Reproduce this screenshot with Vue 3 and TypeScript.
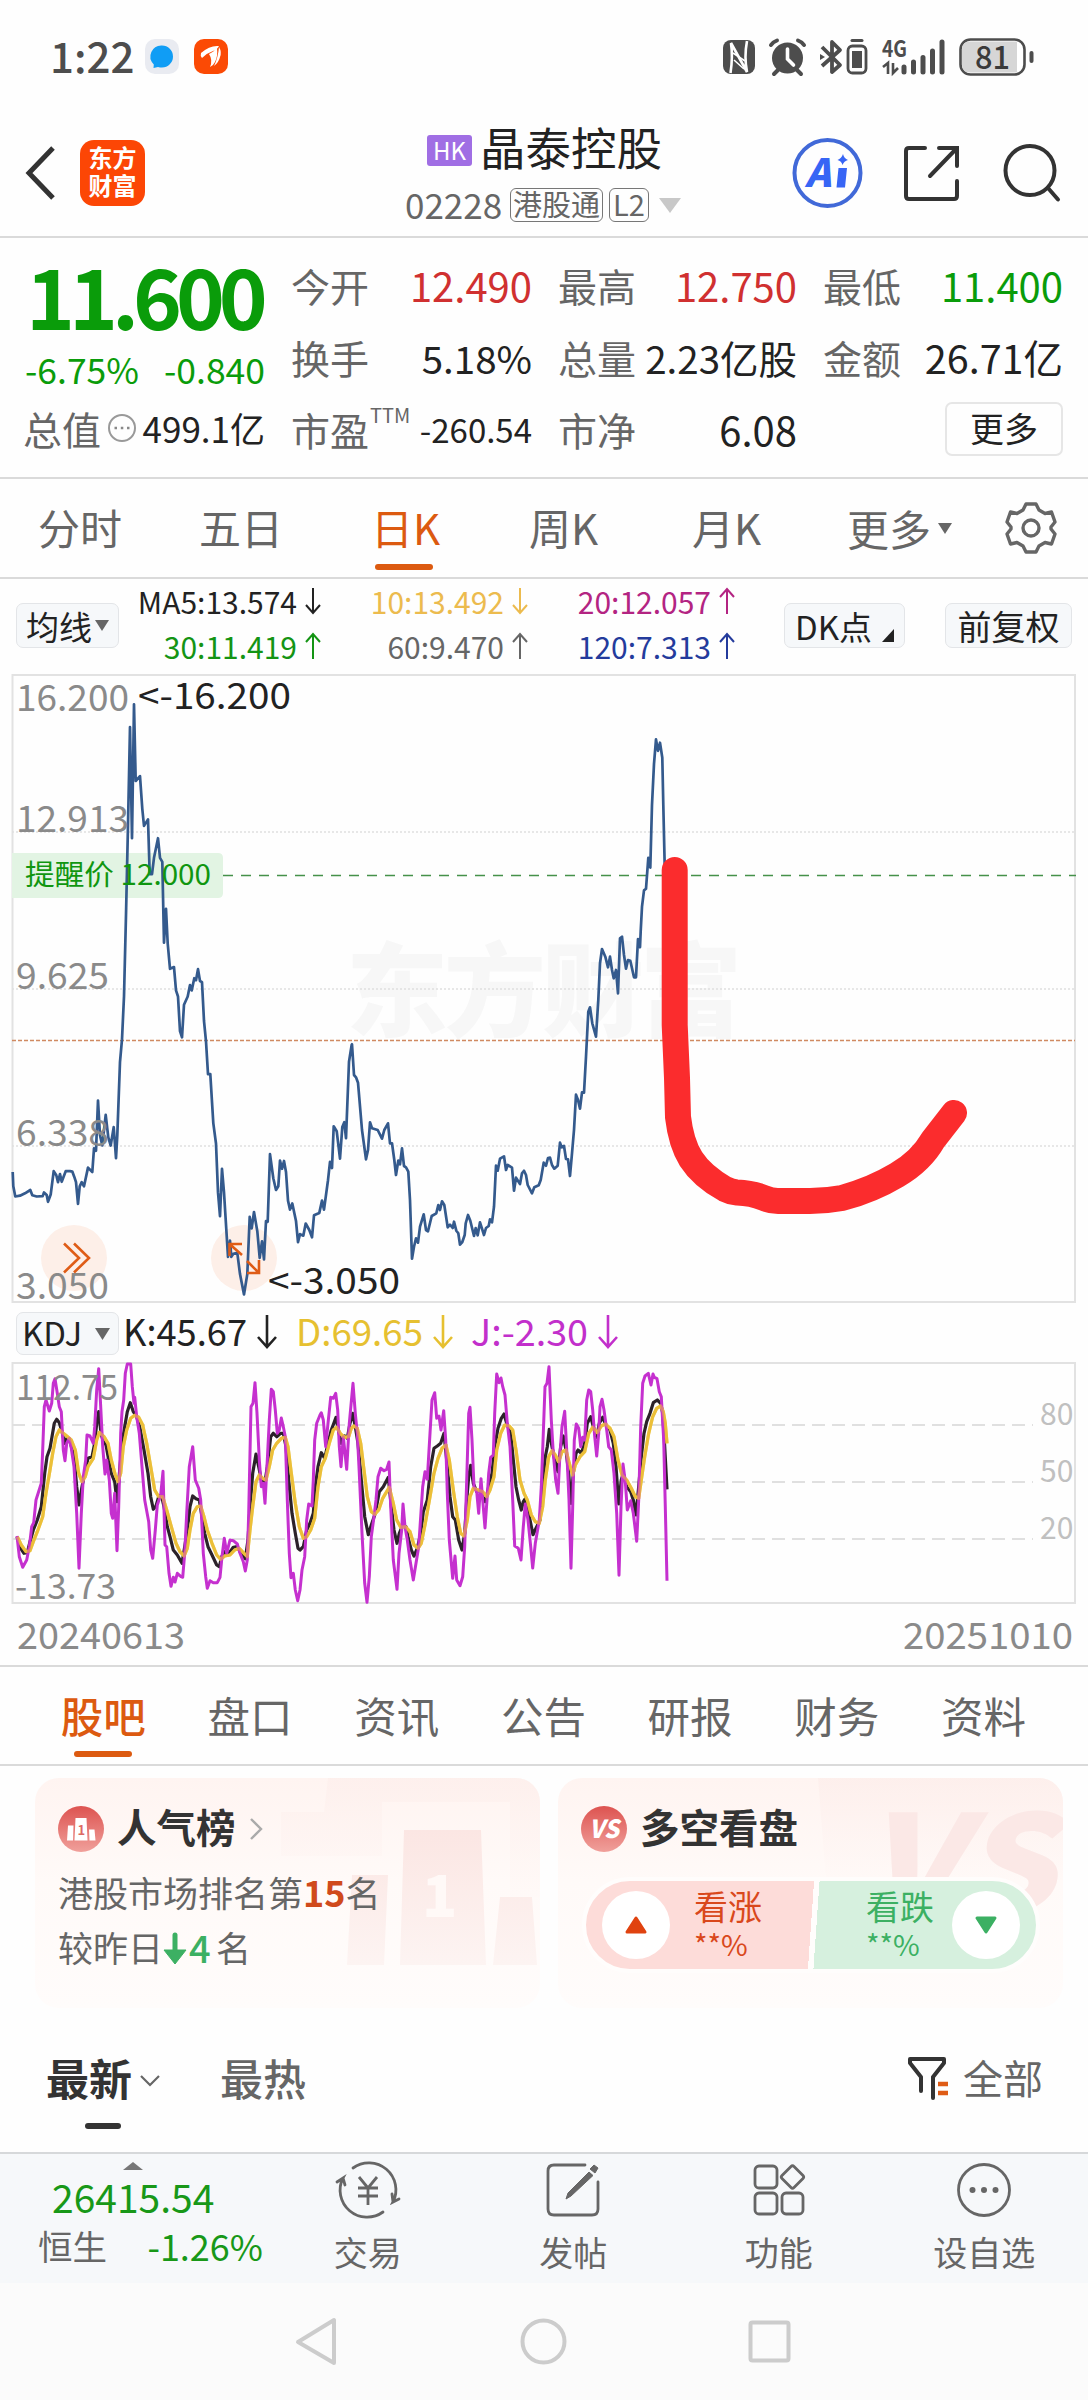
<script setup lang="ts">
interface Plane {
  x: number
  y: number
  sx: number
  sy: number
}

/** Places raw "x,y x,y" samples on the chart canvas. */
function place(raw: string, p: Plane): string {
  return raw
    .trim()
    .split(/\s+/)
    .map((pair) => {
      const [x, y] = pair.split(',').map(Number)
      return `${(p.x + x / p.sx).toFixed(1)},${(p.y + y / p.sy).toFixed(1)}`
    })
    .join(' ')
}

const priceLine = [
  place(
    '38,1230 40,1265 46,1290 60,1288 75,1282 91,1274 97,1287 110,1290 128,1289 132,1280 140,1286 144,1303 152,1285 161,1228 169,1238 174,1255 180,1235 185,1254 197,1228 210,1228 217,1229 223,1242 228,1255 234,1308 239,1265 245,1255 252,1265 264,1219 277,1230 282,1172 288,1178 294,1055 300,1140 307,1165 317,1090 325,1145 332,1165 341,1120 348,1196 352,1140 360,960 366,905 372,800 378,600 384,380 390,140 396,412 402,84 407,272 420,260 427,340 432,382 444,366 449,500 456,500 462,460 474,412 480,460 487,470 492,668 498,585 503,670 510,732 522,728 528,785 534,800 540,885 546,900 552,820 563,800 570,772 575,785 583,755 588,760 594,733 600,762 606,765 612,860 618,910 624,990 631,990 640,1110 648,1160 654,1280 660,1338 666,1222 672,1280 684,1438 690,1398 694,1438 700,1430 712,1428 720,1480 732,1530 742,1480 749,1340 755,1368 762,1328 772,1375 779,1440 786,1400 792,1444 798,1350 803,1352 810,1186 820,1245 828,1274 835,1265 840,1202 846,1222 852,1203 858,1230 864,1300 870,1322 877,1307 888,1350 894,1402 900,1382 910,1386 917,1356 928,1372 936,1390 942,1336 958,1330 966,1300 972,1322 984,1250 990,1205 996,1220 1001,1118 1010,1130 1020,1197 1027,1120 1033,1108 1038,1147 1047,960 1055,918',
    { x: 0, y: 670, sx: 3, sy: 2.45 },
  ),
  place(
    '36,433 42,525 48,532 54,548 66,690 78,778 84,750 90,667 96,685 113,690 126,716 133,690 144,670 150,730 156,730 163,780 168,825 175,782 180,793 186,745 192,798 198,802 205,815 210,900 216,1076 222,1040 228,1015 234,1028 240,980 251,943 258,990 264,994 275,948 289,940 295,915 300,930 306,904 313,915 323,982 330,974 338,984 342,965 349,992 355,1000 360,1034 367,1026 374,1005 377,970 384,945 391,962 402,1008 407,984 413,1006 420,967 432,1005 438,984 446,978 450,958 456,967 462,920 468,797 473,812 480,776 492,769 498,810 503,795 516,803 522,872 528,833 540,852 546,820 552,812 558,825 563,855 576,880 583,862 596,856 602,840 611,788 618,797 624,774 630,773 636,795 643,806 653,797 660,728 665,742 672,738 678,777 684,778 690,828 696,760 702,690 708,584 714,600 720,626 726,577 732,578 738,470 745,335 750,322 757,370 768,410 775,300 780,190 786,147 796,170 804,202 810,170 816,210 821,235 828,210 834,280 840,115 846,110 852,165 858,206 864,180 871,182 882,232 888,232 894,117 900,142',
    { x: 340, y: 900, sx: 3, sy: 3 },
  ),
  place(
    '2,640 6,580 12,540 18,536 25,460 31,484 36,330 42,230 48,170 54,198 60,178 67,215 70,330 74,480',
    { x: 640, y: 670, sx: 3, sy: 2.45 },
  ),
].join(' ')

const left: Plane = { x: 0, y: 1300, sx: 3, sy: 3 }
const right: Plane = { x: 350, y: 1300, sx: 3, sy: 3 }

const jLine =
  place(
    '51,708 58,770 68,802 80,780 88,740 95,680 101,668 108,600 124,550 128,450 133,320 138,300 148,333 155,310 160,250 165,236 172,280 178,320 184,335 190,450 195,482 200,430 208,415 214,445 222,500 230,640 237,805 244,640 250,530 257,480 261,405 270,408 280,430 284,380 290,270 296,206 302,320 308,440 315,522 320,480 328,540 334,640 338,655 344,580 351,752 356,620 362,400 366,335 371,300 376,220 382,192 392,192 397,260 402,310 404,292 410,350 418,400 426,500 434,600 446,665 452,750 458,775 466,690 472,615 482,585 489,514 495,735 500,740 507,820 513,859 520,832 525,846 532,820 543,830 548,832 554,760 560,640 568,500 578,440 586,540 596,565 602,600 606,680 610,760 617,830 622,865 630,842 640,848 652,848 660,832 666,770 673,715 680,760 690,720 700,722 712,732 720,760 730,785 736,813 742,780 746,640 753,320 759,310 765,248 771,340 778,480 784,560 790,550 795,610 802,480 808,360 814,268 820,275 826,330 832,400 838,390 844,354 850,380 856,410 862,600 868,760 873,833 880,820 886,870 893,902 900,870 906,810 914,770 920,660 926,612 936,618 940,540 944,420 950,370 960,345 964,338 970,360 977,440 984,370 992,292 1000,295 1007,280 1013,330 1018,440 1023,500 1030,410 1040,508 1048,370 1059,250',
    left,
  ) +
  ' ' +
  place(
    '16,340 22,400 28,520 36,700 44,850 51,907 58,830 64,710 72,650 78,600 84,530 92,505 102,512 110,508 117,486 122,620 130,780 141,868 147,760 155,690 159,612 165,680 172,720 180,780 190,840 198,790 206,740 212,650 218,560 225,515 232,538 240,400 246,300 254,278 260,355 267,348 273,390 281,332 287,420 292,580 298,720 308,835 315,768 320,840 330,857 338,830 344,740 350,540 356,340 360,322 366,420 372,560 380,575 386,640 393,536 398,600 405,684 411,600 416,520 422,472 430,465 434,340 440,222 447,248 453,234 458,260 465,285 472,370 480,440 488,600 494,738 505,745 513,780 520,680 526,612 534,660 542,740 548,804 556,730 568,660 574,560 580,400 585,260 591,250 597,200 604,360 610,460 617,540 624,580 630,460 636,380 644,334 650,450 657,600 663,805 668,620 673,420 679,372 686,385 692,440 698,412 704,420 710,300 716,270 722,275 728,330 734,410 740,468 746,400 750,320 756,298 762,330 770,390 776,440 784,450 792,520 800,640 807,826 813,620 819,492 826,545 832,630 842,602 850,640 860,724 866,600 872,380 878,250 885,228 895,220 903,255 909,222 913,232 921,236 928,275 934,290 941,420 946,620 951,842',
    right,
  )

const kLine =
  place(
    '51,710 62,745 72,760 82,758 90,725 100,690 112,660 124,620 134,520 141,470 150,445 156,410 163,370 170,358 178,368 186,395 194,430 202,412 210,425 222,470 230,560 237,615 246,560 256,510 264,475 276,470 284,430 290,370 296,335 303,400 310,425 318,435 326,480 334,520 344,545 351,605 360,500 366,430 374,380 382,335 391,308 400,335 410,350 420,385 432,450 444,520 452,590 460,628 468,618 476,590 484,585 492,620 502,680 510,710 520,750 532,765 546,790 554,740 562,690 570,620 578,588 588,596 598,600 606,650 614,700 624,740 636,765 650,795 658,800 666,768 674,755 684,764 700,742 712,740 724,762 736,776 744,720 750,620 758,520 768,462 776,500 784,540 794,552 802,500 812,410 820,400 830,410 842,400 850,400 858,440 866,540 876,640 886,700 894,745 900,750 910,740 920,690 930,670 940,640 946,560 954,500 964,458 974,475 984,430 994,390 1002,368 1008,352 1014,385 1024,430 1034,408 1042,415 1050,370 1058,340',
    left,
  ) +
  ' ' +
  place(
    '16,380 24,430 34,540 44,650 55,704 64,675 76,640 88,575 100,560 115,532 124,620 132,690 141,730 148,700 158,675 168,680 176,720 184,750 192,768 202,745 212,700 220,635 232,600 242,500 252,445 262,438 272,430 282,400 290,480 300,590 308,650 316,660 326,720 336,750 344,700 350,600 356,530 362,496 370,550 380,575 390,570 398,590 406,605 416,560 426,520 434,440 444,385 454,355 462,342 470,370 482,400 490,480 498,560 506,600 514,630 520,605 526,596 534,630 542,670 549,704 558,685 570,660 578,560 586,470 592,440 598,388 606,440 614,480 624,515 632,440 640,408 648,450 656,520 663,610 670,520 678,460 684,450 694,460 704,430 712,370 722,350 730,380 740,412 748,370 758,352 768,375 780,390 790,430 798,500 806,612 814,540 820,520 830,560 842,575 850,600 858,645 866,560 874,470 882,400 890,365 900,340 910,308 922,300 932,310 938,340 944,440 951,568',
    right,
  )

const dLine =
  place(
    '52,710 64,735 78,755 90,752 100,725 112,695 128,650 138,580 150,510 158,460 168,410 178,390 188,398 200,408 214,420 226,450 236,520 246,545 256,530 264,500 280,475 290,420 298,397 312,410 324,430 334,480 346,525 354,545 362,520 370,440 380,390 392,355 404,346 416,352 428,375 440,430 452,500 464,570 476,590 488,590 500,630 514,680 528,730 540,755 552,768 562,745 570,690 580,640 592,620 602,618 612,650 622,690 636,730 650,765 662,778 674,768 690,765 704,750 718,745 730,758 742,770 750,690 758,620 768,545 778,525 788,535 798,540 808,500 818,450 830,430 844,415 856,412 864,440 874,520 886,610 898,680 910,715 920,710 932,690 944,655 954,560 964,500 976,475 988,430 1000,390 1010,382 1022,402 1034,412 1046,410 1054,385',
    left,
  ) +
  ' ' +
  place(
    '12,378 22,385 32,430 42,510 52,590 64,635 74,643 86,630 98,595 110,575 118,562 130,610 140,660 152,682 166,680 180,695 192,735 204,745 214,730 226,670 240,590 252,520 264,475 276,445 288,435 298,480 310,570 322,650 332,700 342,708 352,660 360,590 370,565 384,570 398,575 410,590 420,570 432,530 440,450 452,400 464,375 478,378 488,390 498,450 510,540 522,580 532,600 544,645 556,665 568,670 578,620 586,540 596,470 606,452 616,465 626,485 636,455 648,450 658,490 668,525 676,495 690,470 704,455 716,400 728,382 742,398 754,378 766,372 780,385 792,410 804,480 816,525 830,540 844,565 856,590 866,595 874,540 884,470 896,400 908,350 920,325 932,318 940,335 946,370 951,430',
    right,
  )

const axis = [
  { label: '16.200', y: 711, w: 111 },
  { label: '12.913', y: 832, w: 111 },
  { label: '9.625', y: 989, w: 91 },
  { label: '6.338', y: 1146, w: 91 },
  { label: '3.050', y: 1299, w: 91 },
]

const averages = [
  { text: 'MA5:13.574', up: false, color: '#222222' },
  { text: '10:13.492', up: false, color: '#ecbb4e' },
  { text: '20:12.057', up: true, color: '#b32482' },
  { text: '30:11.419', up: true, color: '#149414' },
  { text: '60:9.470', up: true, color: '#666666' },
  { text: '120:7.313', up: true, color: '#243b9c' },
]

const indicators = [
  { text: 'K:45.67', color: '#222222', w: 122, gap: 19 },
  { text: 'D:69.65', color: '#e6c030', w: 125, gap: 18 },
  { text: 'J:-2.30', color: '#c22fcb', w: 115, gap: 0 },
]

const sections = ['股吧', '盘口', '资讯', '公告', '研报', '财务', '资料']
</script>

<template>
  <div class="page">
    <div class="status">
      <span class="clock">1:22</span>
      <svg class="app1" width="34" height="35" viewBox="0 0 34 35">
        <rect width="34" height="35" rx="10" fill="#e9ebf1" />
        <path d="M17 6.500a11 11 0 0 1 0 22q-2 0-4-.6L8.500 29l.3-3.600A11 11 0 0 1 17 6.500z" fill="#109df5" />
      </svg>
      <svg class="app2" width="34" height="35" viewBox="0 0 34 35">
        <rect width="34" height="35" rx="10" fill="#fb4a05" />
        <path d="M7 14q9-8 18-7q-2 4-6 5q-6 2-11 7q-2-2-1-5zM15 15q6-3 8-6q1 8-2 14q-2 4-5 5q3-7-1-13zM25 8q3 5 1 10q-1 5-6 9q4-8 5-19z" fill="#fff" />
      </svg>
      <svg class="sysicons" width="345" height="54" viewBox="720 29 345 54">
        <rect x="723" y="39" width="32" height="34" rx="8" fill="#4d4d4d" />
        <path d="M730.500 72Q733 56 731 42L747 71Q744 56 747 40" fill="none" stroke="#fff" stroke-width="2.600" />
        <path d="M733 52L745 60M734 59L744 68" stroke="#fff" stroke-width="1.600" />
        <circle cx="787.500" cy="57" r="15.500" fill="#4d4d4d" />
        <path d="M771 44q2-3 6-4.500M804 44q-2-3-6-4.500M778 69l-4 4M797 69l4 4" stroke="#4d4d4d" stroke-width="4" stroke-linecap="round" fill="none" />
        <path d="M787.500 48v10l6 6" stroke="#fff" stroke-width="3.600" fill="none" stroke-linecap="round" />
        <path d="M822 46L840 64L832 71V41L840 49L822 65" fill="none" stroke="#4d4d4d" stroke-width="3.800" stroke-linejoin="round" />
        <path d="M820 53l5 3-5 3z" fill="#4d4d4d" />
        <rect x="848" y="45" width="18" height="27" rx="4.500" fill="none" stroke="#4d4d4d" stroke-width="2.800" />
        <rect x="852" y="50" width="10" height="17" fill="#4d4d4d" />
        <path d="M852 39.500h10" stroke="#4d4d4d" stroke-width="3" stroke-linecap="round" />
        <text x="882" y="56" textLength="25" lengthAdjust="spacingAndGlyphs" font-size="23" font-weight="700" fill="#4d4d4d">4G</text>
        <path d="M883 66l5-4v11M893 62v10l5-5" fill="none" stroke="#4d4d4d" stroke-width="2.600" />
        <path d="M904 66v5M913.500 61v10M923 56.500v14.500M932.500 50v21M942 41v30" stroke="#4d4d4d" stroke-width="5" stroke-linecap="round" />
        <rect x="960.500" y="38.500" width="64" height="35" rx="10" fill="#fff" stroke="#4d4d4d" stroke-width="2.600" />
        <path d="M970 40.500H1017V71.500H970q-8 0-8-8V48.500q0-8 8-8z" fill="#d6d6d6" />
        <path d="M1031.500 52v8" stroke="#4d4d4d" stroke-width="4" stroke-linecap="round" />
        <text x="975" y="68" textLength="35" lengthAdjust="spacingAndGlyphs" font-size="32.500" font-weight="500" fill="#3a3a3a">81</text>
      </svg>
    </div>

    <header class="head">
      <svg class="back" width="34" height="56" viewBox="0 0 34 56"><path d="M29 3L5 28L29 53" fill="none" stroke="#333" stroke-width="5" /></svg>
      <div class="logo"><span>东方</span><span>财富</span></div>
      <div class="title">
        <div class="name"><i class="hk">HK</i><b>晶泰控股</b></div>
        <div class="code">
          <span class="num">02228</span><i class="tag">港股通</i><i class="tag l2">L2</i>
          <svg width="22" height="15" viewBox="0 0 22 15"><path d="M0 0H22L11 15z" fill="#c8c8c8" /></svg>
        </div>
      </div>
      <svg class="tools" width="280" height="80" viewBox="788 132 280 80">
        <circle cx="826.500" cy="172" r="33" fill="none" stroke="#4169d8" stroke-width="4" />
        <text x="804" y="186" font-size="39" font-weight="900" fill="#3765f5" font-style="italic">A</text>
        <path d="M837.500 167h8.500l-2 19.500h-8.500zM842 153q1 4.500 5 6q-4 1-5.500 5q-1-4-5-5q4-1.500 5.500-6z" fill="#3765f5" />
        <path d="M924 147H908q-3 0-3 3V195q0 3 3 3H953q3 0 3-3V180M938 147H956V165M956 147L929 175" fill="none" stroke="#333" stroke-width="4" stroke-linecap="round" />
        <circle cx="1029" cy="169.500" r="24.500" fill="none" stroke="#333" stroke-width="4" />
        <path d="M1047 187L1057 198.500" stroke="#333" stroke-width="4" stroke-linecap="round" />
      </svg>
    </header>

    <section class="quote">
      <div class="lead">
        <div class="price">11.600</div>
        <div class="change"><span>-6.75%</span><span>-0.840</span></div>
        <div class="cap">
          <span class="lab">总值</span>
          <svg width="30" height="30" viewBox="0 0 30 30"><circle cx="15" cy="15" r="13" fill="none" stroke="#999" stroke-width="2" /><path d="M7.500 15h2.500M13.800 15h2.500M20 15h2.500" stroke="#888" stroke-width="2.600" /></svg>
          <span class="val">499.1亿</span>
        </div>
      </div>
      <div class="cells">
        <div class="cell"><span class="lab">今开</span><span class="val num1 red">12.490</span></div>
        <div class="cell"><span class="lab">最高</span><span class="val num1 red">12.750</span></div>
        <div class="cell"><span class="lab">最低</span><span class="val num1 green">11.400</span></div>
        <div class="cell"><span class="lab">换手</span><span class="val">5.18%</span></div>
        <div class="cell"><span class="lab">总量</span><span class="val">2.23亿股</span></div>
        <div class="cell"><span class="lab">金额</span><span class="val num2">26.71亿</span></div>
        <div class="cell"><span class="lab">市盈<sup>TTM</sup></span><span class="val small">-260.54</span></div>
        <div class="cell"><span class="lab">市净</span><span class="val num1">6.08</span></div>
        <div class="cell end"><span class="morebtn">更多</span></div>
      </div>
    </section>

    <nav class="periods">
      <span class="p1">分时</span><span class="p2">五日</span><span class="p3 on">日K</span><span class="p4">周K</span><span class="p5">月K</span>
      <span class="p6">更多<svg width="14" height="11" viewBox="0 0 14 11"><path d="M0 0H14L7 11z" fill="#666" /></svg></span>
      <svg class="gear" width="52" height="54" viewBox="-26 -27 52 54">
        <path d="M-5-24H5L8-18L14-14.500L20.500-16L24-6L20-1V1L24 6L20.500 16L14 14.500L8 18L5 24H-5L-8 18L-14 14.500L-20.500 16L-24 6L-20 1V-1L-24-6L-20.500-16L-14-14.500L-8-18z" fill="none" stroke="#666" stroke-width="3.400" stroke-linejoin="round" />
        <circle r="8" fill="none" stroke="#666" stroke-width="3.400" />
      </svg>
    </nav>

    <div class="mabar">
      <span class="chip ma">均线<svg width="14" height="11" viewBox="0 0 14 11"><path d="M0 0H14L7 11z" fill="#666" /></svg></span>
      <div class="avgs">
        <span v-for="a in averages" :key="a.text" :style="{ color: a.color }">{{ a.text
          }}<svg width="16" height="28" viewBox="0 0 16 28"><path :d="a.up ? 'M8 27V2M1 10L8 2L15 10' : 'M8 1V26M1 18L8 26L15 18'" fill="none" stroke="currentColor" stroke-width="2" /></svg></span>
      </div>
      <span class="chip dk">DK点<svg width="12" height="13" viewBox="0 0 12 13"><path d="M12 0V13H0z" fill="#222" /></svg></span>
      <span class="chip fq">前复权</span>
    </div>

    <svg class="chart" width="1088" height="644" viewBox="0 662 1088 644">
      <text x="346" y="1029" textLength="396" font-size="102" font-weight="900" fill="#f7f7f7">东方财富</text>
      <rect x="12.500" y="675" width="1062.500" height="627" fill="none" stroke="#e2e2e2" stroke-width="2" />
      <path d="M12 832H1075M12 989H1075M12 1146H1075" stroke="#e0e0e0" stroke-width="1.500" stroke-dasharray="2 2" />
      <path d="M12 853H218q5 0 5 5V893q0 5-5 5H12z" fill="#e2f4e3" />
      <circle cx="74" cy="1258" r="33" fill="#fdefe8" />
      <circle cx="244" cy="1258" r="33" fill="#fdefe8" />
      <path d="M223 875.500H1076" stroke="#45914a" stroke-width="1.600" stroke-dasharray="10 8" />
      <path d="M12 1040.500H1075" stroke="#d08a62" stroke-width="1.600" stroke-dasharray="4 2" />
      <polyline :points="priceLine" fill="none" stroke="#345a8d" stroke-width="2.700" stroke-linejoin="round" />
      <text v-for="a in axis" :key="a.label" x="16" :y="a.y" :textLength="a.w + 2" lengthAdjust="spacingAndGlyphs" font-size="36" fill="#8a8a8a">{{ a.label }}</text>
      <text x="25" y="885" textLength="186" lengthAdjust="spacingAndGlyphs" font-size="28.500" fill="#109610">提醒价 12.000</text>
      <g font-size="36" fill="#222">
        <text x="138" y="709" textLength="153" lengthAdjust="spacingAndGlyphs">&lt;-16.200</text>
        <text x="268" y="1294" textLength="132" lengthAdjust="spacingAndGlyphs">&lt;-3.050</text>
      </g>
      <g fill="none" stroke="#df5c16" stroke-width="2.600">
        <path d="M64 1243.500L79 1258L64 1272.500M74 1243.500L89 1258L74 1272.500" />
        <path d="M242 1244H229.500V1256M229.500 1244L242 1255M247 1273H259V1260M259 1273L247 1261" />
      </g>
      <path d="M674.700 870V1025L677 1078L678 1117Q681 1143 691 1159Q702 1176 725 1189Q731 1192 737 1192.500Q752 1193 764 1198Q771 1201 778 1201H810Q826 1201 842 1198Q872 1190 897 1175Q921 1161 933 1140L954 1113" fill="none" stroke="#fb2c2d" stroke-width="26" stroke-linecap="round" stroke-linejoin="round" />
    </svg>

    <div class="kdjbar">
      <span class="chip kdj">KDJ<svg width="15" height="12" viewBox="0 0 15 12"><path d="M0 0H15L7.500 12z" fill="#666" /></svg></span>
      <svg v-for="k in indicators" :key="k.text" :width="k.w + 32 + k.gap" height="50" :style="{ color: k.color }">
        <text x="-2" y="38.500" :textLength="k.w + 2" lengthAdjust="spacingAndGlyphs" font-size="37" fill="currentColor">{{ k.text }}</text>
        <path :d="`M${k.w + 20} 8V40M${k.w + 11} 30L${k.w + 20} 40L${k.w + 29} 30`" fill="none" stroke="currentColor" stroke-width="2.600" />
      </svg>
    </div>

    <svg class="chart" width="1088" height="304" viewBox="0 1361 1088 304">
      <rect x="12.500" y="1363" width="1062.500" height="240" fill="none" stroke="#e2e2e2" stroke-width="2" />
      <path d="M12 1425H1033M12 1482H1033M12 1539H1033" stroke="#e0e0e0" stroke-width="1.800" stroke-dasharray="13 7" />
      <g fill="none" stroke-width="3.200" stroke-linejoin="round">
        <polyline :points="kLine" stroke="#2b2229" />
        <polyline :points="dLine" stroke="#e6c238" />
        <polyline :points="jLine" stroke="#c530cf" stroke-width="3" />
        <polyline :points="dLine" stroke="#f0bd38" stroke-opacity=".55" />
      </g>
      <g font-size="35" fill="#8a8a8a">
        <text x="16" y="1400" textLength="102" lengthAdjust="spacingAndGlyphs">112.75</text>
        <text x="15" y="1598.500" textLength="101" lengthAdjust="spacingAndGlyphs">-13.73</text>
        <text x="17" y="1648.500" font-size="37" textLength="168" lengthAdjust="spacingAndGlyphs">20240613</text>
        <text x="903" y="1648.500" font-size="37" textLength="170" lengthAdjust="spacingAndGlyphs">20251010</text>
      </g>
      <g font-size="30" fill="#c0c0c0">
        <text x="1040" y="1425">80</text>
        <text x="1040" y="1482">50</text>
        <text x="1040" y="1539">20</text>
      </g>
    </svg>

    <nav class="sections">
      <span v-for="(s, i) in sections" :key="s" :class="{ on: i === 0 }">{{ s }}</span>
    </nav>

    <div class="cards">
      <div class="card">
        <svg class="deco" width="505" height="230" viewBox="35 1778 505 230">
          <defs>
            <linearGradient id="fade" x1="0" y1="0" x2="0" y2="1"><stop offset="0" stop-color="#fbe6e3" /><stop offset="1" stop-color="#fdf4f2" /></linearGradient>
            <linearGradient id="soft" x1="0" y1="0" x2="0" y2="1"><stop offset="0" stop-color="#fdeeeb" /><stop offset="1" stop-color="#fff9f7" /></linearGradient>
          </defs>
          <path d="M328 1778H540V1897H510V1802H382V1856H281V1812H324z" fill="url(#soft)" opacity=".7" />
          <path d="M404 1830H481L486 1965H400zM352 1875H388L384 1965H347zM500 1897H532L537 1965H493z" fill="url(#fade)" />
          <text x="422" y="1917" font-size="58" font-weight="900" fill="#fff9f7">1</text>
        </svg>
        <div class="cardhead">
          <svg width="46" height="46" viewBox="0 0 46 46">
            <defs><linearGradient id="badge" x1="0" y1="0" x2="0" y2="1"><stop offset="0" stop-color="#dd5350" /><stop offset="1" stop-color="#f0a09b" /></linearGradient></defs>
            <circle cx="23" cy="23" r="23" fill="url(#badge)" />
            <path d="M10 19.500h5.500l-.5 15H9zM17.500 12h11l1 22.500h-13zM31 23.500h5.500l1 11h-6z" fill="#fff" />
            <text x="19.500" y="28.500" font-size="13" font-weight="700" fill="#dd6a64">1</text>
          </svg>
          <b>人气榜</b>
          <svg class="chev" width="14" height="24" viewBox="0 0 14 24"><path d="M2 2L12 12L2 22" fill="none" stroke="#aaa" stroke-width="2.400" /></svg>
        </div>
        <div class="rank">港股市场排名第<b>15</b>名</div>
        <div class="rank second">较昨日<svg width="24" height="32" viewBox="0 0 24 32"><path d="M12 2V20" stroke="#3cb063" stroke-width="5" stroke-linecap="round" /><path d="M1 17H23L12 31z" fill="#3cb063" stroke="#3cb063" stroke-linejoin="round" /></svg><em>4</em>名</div>
      </div>
      <div class="card">
        <svg class="deco" width="505" height="230" viewBox="558 1778 505 230">
          <path d="M818 1778H1063V1880H826z" fill="url(#soft)" opacity=".8" />
          <text x="862" y="1912" font-size="134" font-weight="900" font-style="italic" fill="#fbe8e6" textLength="192" lengthAdjust="spacingAndGlyphs">VS</text>
        </svg>
        <div class="cardhead">
          <svg width="46" height="46" viewBox="0 0 46 46">
            <circle cx="23" cy="23" r="23" fill="url(#badge)" />
            <text x="8" y="32" font-size="25" font-weight="900" font-style="italic" textLength="30" lengthAdjust="spacingAndGlyphs" fill="#fff">VS</text>
          </svg>
          <b>多空看盘</b>
        </div>
        <div class="vote">
          <div class="bull">
            <i><svg width="22" height="18" viewBox="0 0 22 18"><path d="M11 2L20 16H2z" fill="#e04310" stroke="#e04310" stroke-width="3" stroke-linejoin="round" /></svg></i>
            <span>看涨<small>**%</small></span>
          </div>
          <div class="bear">
            <span>看跌<small>**%</small></span>
            <i><svg width="22" height="18" viewBox="0 0 22 18"><path d="M11 16L20 2H2z" fill="#3cb063" stroke="#3cb063" stroke-width="3" stroke-linejoin="round" /></svg></i>
          </div>
        </div>
      </div>
    </div>

    <div class="sort">
      <span class="new">最新</span>
      <svg class="down" width="20" height="14" viewBox="0 0 20 14"><path d="M1 2L10 11L19 2" fill="none" stroke="#666" stroke-width="2.200" /></svg>
      <span class="hot">最热</span>
      <svg class="filter" width="44" height="48" viewBox="0 0 44 48">
        <path d="M14 36V22L3 8V4H37V8L26 22V43" fill="none" stroke="#333" stroke-width="4" stroke-linejoin="round" stroke-linecap="round" />
        <path d="M31 29h10M31 38h10" stroke="#df5c16" stroke-width="4.500" />
      </svg>
      <span class="all">全部</span>
    </div>

    <footer class="dock">
      <div class="index">
        <svg width="20" height="8" viewBox="0 0 20 8"><path d="M10 0L20 8H0z" fill="#777" /></svg>
        <div class="ival">26415.54</div>
        <div class="irow"><span>恒生</span><em>-1.26%</em></div>
      </div>
      <div class="item">
        <svg width="64" height="60" viewBox="-32 -30 64 60" fill="none" stroke="#666" stroke-width="2.800">
          <path d="M-15-22A27 27 0 0 1 25 12L31 9M25 12L24 4M15 22A27 27 0 0 1-25-12L-31-8M-25-12L-23-5" stroke-linecap="round" />
          <path d="M-9-13L0-2L9-13M0-2V15M-10-2H10M-10 6H10" />
        </svg>
        <span>交易</span>
      </div>
      <div class="item">
        <svg width="64" height="60" viewBox="-32 -30 64 60" fill="none" stroke="#666" stroke-width="2.800">
          <path d="M12-25H-19q-6 0-6 6V19q0 6 6 6H19q6 0 6-6V-8" stroke-linecap="round" />
          <path d="M21-25l4 3-3 5-5-4zM16-18l4 3.500L-2 6l-5 3 2-6z" fill="#666" stroke-width="1" />
        </svg>
        <span>发帖</span>
      </div>
      <div class="item">
        <svg width="64" height="60" viewBox="-32 -30 64 60" fill="none" stroke="#666" stroke-width="2.800">
          <rect x="-24" y="-24" width="22" height="22" rx="4" />
          <rect x="-24" y="3" width="22" height="21" rx="4" />
          <rect x="3" y="3" width="21" height="21" rx="4" />
          <path d="M12-23.500q1.500-1.500 3 0l9 9q1.500 1.500 0 3l-9 9q-1.500 1.500-3 0l-9-9q-1.500-1.500 0-3z" />
        </svg>
        <span>功能</span>
      </div>
      <div class="item">
        <svg width="64" height="60" viewBox="-32 -30 64 60">
          <circle r="25.500" fill="none" stroke="#666" stroke-width="2.800" />
          <g fill="#666"><circle cx="-11.500" r="3" /><circle r="3" /><circle cx="11.500" r="3" /></g>
        </svg>
        <span>设自选</span>
      </div>
    </footer>

    <div class="sysnav">
      <svg width="1088" height="117" viewBox="0 2283 1088 117" fill="none" stroke="#ccc" stroke-width="4" stroke-linejoin="round">
        <path d="M334 2320V2363L298 2342z" />
        <circle cx="543.500" cy="2341.500" r="21" />
        <rect x="750.500" y="2322.500" width="38" height="38" rx="2" />
      </svg>
    </div>
  </div>
</template>

<style>
body {
  margin: 0;
  background: #fdfdfd;
}
</style>

<style scoped>
.page {
  width: 1088px;
  height: 2400px;
  overflow: hidden;
  background: #fefefe;
  color: #222;
  font-family: 'Noto Sans CJK SC', sans-serif;
  display: flex;
  flex-direction: column;
}
.page > * {
  flex: none;
  box-sizing: border-box;
}
svg {
  display: block;
  flex: none;
  overflow: visible;
}
i,
em {
  font-style: normal;
}
.status {
  height: 112px;
  display: flex;
  align-items: center;
  padding: 1px 23px 0 50px;
}
.clock {
  width: 95px;
  margin-top: -3px;
  font-size: 42px;
  font-weight: 500;
  line-height: 50px;
  color: #4d4d4d;
}
.app2 {
  margin-left: 15px;
}
.sysicons {
  margin-left: auto;
}
.head {
  height: 126px;
  border-bottom: 2px solid #dadada;
  display: flex;
  align-items: center;
  padding-left: 24px;
}
.back {
  margin-top: -3px;
}
.logo {
  margin: -2px 0 0 22px;
  width: 65px;
  height: 66px;
  border-radius: 14px;
  background: #fc4605;
  color: #fff;
  display: flex;
  flex-direction: column;
  align-items: center;
  justify-content: center;
  font-size: 24px;
  font-weight: 700;
  line-height: 28px;
  padding-bottom: 4px;
  box-sizing: border-box;
}
.title {
  margin-left: 260px;
  width: 384px;
  height: 120px;
}
.name {
  margin: 10px 0 0 22px;
  display: flex;
  align-items: center;
  height: 48px;
}
.hk {
  width: 45px;
  height: 31px;
  margin-top: 4px;
  border-radius: 3px;
  background: #a06ee4;
  color: #fff;
  font-size: 24px;
  line-height: 29px;
  text-align: center;
}
.name b {
  margin: -5px 0 0 8px;
  font-size: 45.500px;
  line-height: 48px;
  font-weight: 400;
}
.code {
  display: flex;
  align-items: center;
  height: 36px;
  margin-top: 15px;
  color: #666;
}
.num {
  width: 105px;
  font-size: 35px;
  line-height: 34px;
  margin-top: -3px;
}
.tag {
  box-sizing: border-box;
  width: 93px;
  height: 34px;
  border: 1.500px solid #777;
  border-radius: 6px;
  font-size: 29px;
  line-height: 28px;
  text-align: center;
}
.tag.l2 {
  width: 40px;
  margin: 0 10px 0 6px;
}
.tools {
  margin-top: -3px;
}
.quote {
  height: 241px;
  border-bottom: 2px solid #dadada;
  display: flex;
  padding-left: 25px;
}
.lead {
  width: 240px;
  color: #0a9c0a;
}
.price {
  height: 84px;
  margin: 14px 0 0 1px;
  font-size: 83px;
  font-weight: 700;
  line-height: 84px;
  letter-spacing: -6px;
}
.change {
  height: 50px;
  margin-top: 8px;
  display: flex;
  justify-content: space-between;
  font-size: 35.500px;
  line-height: 50px;
}
.cap {
  height: 72px;
  margin-top: -2px;
  display: flex;
  align-items: center;
  justify-content: space-between;
  line-height: 72px;
}
.cap .lab {
  margin-left: -2px;
}
.cap .val {
  font-size: 35px;
}
.cells {
  margin: 11px 0 0 26px;
  width: 772px;
  display: grid;
  grid-template-columns: 241px 239px 240px;
  grid-auto-rows: 72px;
  column-gap: 26px;
}
.cell {
  display: flex;
  justify-content: space-between;
  align-items: center;
  white-space: nowrap;
  line-height: 72px;
}
.cell > .lab,
.cell > .val {
  height: 73px;
}
.lab {
  font-size: 39px;
  color: #666;
}
.lab sup {
  display: inline-block;
  margin-left: 1px;
  font-size: 20px;
  line-height: 20px;
  vertical-align: 23px;
}
.val {
  font-size: 38.500px;
  color: #222;
}
.val.num1 {
  font-size: 40px;
}
.val.num2 {
  font-size: 39.500px;
}
.val.small {
  font-size: 33px;
}
.val.red {
  color: #d03030;
}
.val.green {
  color: #0a9c0a;
}
.end {
  justify-content: flex-end;
}
.morebtn {
  box-sizing: border-box;
  width: 118px;
  height: 54px;
  border: 2px solid #e6e6e6;
  border-radius: 7px;
  text-align: center;
  font-size: 34px;
  line-height: 47px;
}
.periods {
  height: 100px;
  border-bottom: 2px solid #dadada;
  display: flex;
  font-size: 42px;
  line-height: 96px;
  color: #666;
  padding-left: 38px;
}
.periods span {
  white-space: nowrap;
}
.p1 {
  width: 161px;
}
.p2 {
  width: 172px;
}
.p3 {
  width: 158px;
}
.p4 {
  width: 163px;
}
.p5 {
  width: 155px;
}
.p6 {
  width: 158px;
  display: flex;
  align-items: center;
}
.p6 svg {
  margin-left: 7px;
}
.gear {
  align-self: center;
}
.on {
  color: #dc5a10;
}
.periods .on::after {
  content: '';
  display: block;
  width: 58px;
  height: 6px;
  margin: -11px 0 0 4px;
  border-radius: 3px;
  background: #dc5a10;
}
.mabar {
  height: 83px;
  display: flex;
  align-items: center;
  padding-left: 16px;
  padding-top: 12px;
}
.chip {
  box-sizing: border-box;
  height: 45px;
  border: 1.500px solid #e3e5e8;
  border-radius: 7px;
  background: #f6f8fa;
  display: flex;
  align-items: center;
  font-size: 33px;
  line-height: 40px;
  white-space: nowrap;
}
.ma {
  width: 103px;
  padding-left: 9px;
  margin-top: -2px;
}
.ma svg {
  margin-left: 3px;
}
.avgs {
  width: 616px;
  height: 90px;
  margin-top: -6px;
  display: grid;
  grid-template-columns: 202px 207px 207px;
  grid-auto-rows: 45px;
}
.avgs span {
  display: flex;
  justify-content: flex-end;
  align-items: center;
  font-size: 30px;
  line-height: 45px;
  white-space: nowrap;
}
.avgs svg {
  margin-left: 8px;
}
.dk {
  width: 121px;
  margin: -2px 40px 0 49px;
  padding-left: 10px;
}
.dk svg {
  margin: 20px 0 0 10px;
}
.fq {
  width: 127px;
  margin-top: -2px;
  justify-content: center;
  font-size: 34px;
}
.kdjbar {
  height: 55px;
  display: flex;
  align-items: flex-start;
  padding: 1px 0 0 16px;
}
.kdj {
  width: 103px;
  height: 43px;
  margin: 5px 6px 0 0;
  padding: 0 0 3px 5px;
  font-size: 33px;
}
.kdj svg {
  margin: 3px 8px 0 auto;
}
.sections {
  height: 101px;
  border-top: 2px solid #dadada;
  border-bottom: 2px solid #dadada;
  display: flex;
  padding-left: 30px;
  font-size: 42.500px;
  line-height: 96px;
  color: #666;
}
.sections span {
  width: 146.700px;
  text-align: center;
}
.sections .on {
  font-weight: 500;
}
.sections .on::after {
  content: '';
  display: block;
  width: 58px;
  height: 6px;
  margin: -12px auto 0;
  border-radius: 3px;
  background: #dc5a10;
}
.cards {
  height: 242px;
  padding: 12px 0 0 35px;
  display: flex;
  gap: 18px;
}
.card {
  position: relative;
  box-sizing: border-box;
  width: 505px;
  height: 230px;
  padding: 28px 23px 0;
  border-radius: 24px;
  overflow: hidden;
  background: linear-gradient(#fff4f1, #fffaf8 45%, #fffcfb);
}
.deco {
  position: absolute;
  left: 0;
  top: 0;
}
.cardhead,
.rank,
.vote {
  position: relative;
}
.cardhead {
  display: flex;
  align-items: center;
  height: 46px;
}
.cardhead b {
  margin: -6px 0 0 13px;
  font-size: 39.500px;
  line-height: 46px;
  font-weight: 700;
  color: #333;
}
.chev {
  margin-left: 13px;
}
.rank {
  margin-top: 12px;
  height: 55px;
  display: flex;
  align-items: center;
  font-size: 35px;
  line-height: 55px;
  color: #666;
}
.rank.second {
  margin-top: 0;
}
.rank b {
  font-size: 36px;
  color: #d04a1c;
}
.rank svg {
  margin: 5px 2px 0 0;
}
.rank em {
  font-weight: 500;
  font-size: 38px;
  width: 27px;
  color: #3cb063;
}
.vote {
  width: 450px;
  height: 88px;
  margin: 25px 0 0 1px;
  border: 4px solid #fffdfc;
  border-radius: 50px;
  overflow: hidden;
  display: flex;
  background: linear-gradient(94deg, #fddcd9 50%, #fffdfc 50%, #fffdfc 51.200%, #d6f0de 51.200%);
}
.bull,
.bear {
  width: 225px;
  display: flex;
  align-items: center;
}
.bull {
  color: #d9481c;
}
.bear {
  color: #3cb063;
  justify-content: flex-end;
}
.vote i {
  width: 68px;
  height: 68px;
  border-radius: 50%;
  background: #fff;
  display: flex;
  align-items: center;
  justify-content: center;
}
.bull i {
  margin: 0 24px 0 16px;
}
.bear i {
  margin: 0 16px 0 18px;
}
.vote span {
  font-size: 34px;
  line-height: 42px;
  margin-top: -7px;
}
.vote small {
  display: block;
  font-size: 29px;
  line-height: 32px;
}
.sort {
  height: 144px;
  display: flex;
  align-items: flex-start;
  padding: 41px 0 0 46px;
  line-height: 56px;
  font-size: 43px;
}
.new {
  font-weight: 700;
  color: #333;
  height: 86px;
}
.new::after {
  content: '';
  display: block;
  width: 36px;
  height: 6px;
  margin: 18px 0 0 39px;
  border-radius: 3px;
  background: #333;
}
.down {
  margin: 25px 0 0 8px;
}
.hot {
  margin-left: 60px;
  color: #666;
  font-weight: 500;
}
.filter {
  margin: 6px 0 0 601px;
}
.all {
  margin-left: 12px;
  font-size: 40px;
  color: #666;
}
.dock {
  height: 131px;
  border-top: 2px solid #d6d8da;
  background: #f6f8fa;
  display: flex;
}
.index {
  width: 265px;
  color: #189818;
}
.index > svg {
  margin: 8px 0 0 123px;
}
.ival {
  margin-left: 52px;
  font-size: 39px;
  line-height: 48px;
  margin-top: 2px;
}
.irow {
  display: flex;
  justify-content: space-between;
  align-items: center;
  margin: 1px 2px 0 38px;
  line-height: 48px;
  font-size: 36px;
}
.irow span {
  font-size: 34.500px;
  color: #666;
}
.item {
  width: 205.500px;
  display: flex;
  flex-direction: column;
  align-items: center;
  font-size: 34px;
  line-height: 44px;
  color: #666;
  padding-top: 6px;
}
.item span {
  margin-top: 10px;
}
.sysnav {
  height: 117px;
  background: #fbfbfb;
}
</style>
